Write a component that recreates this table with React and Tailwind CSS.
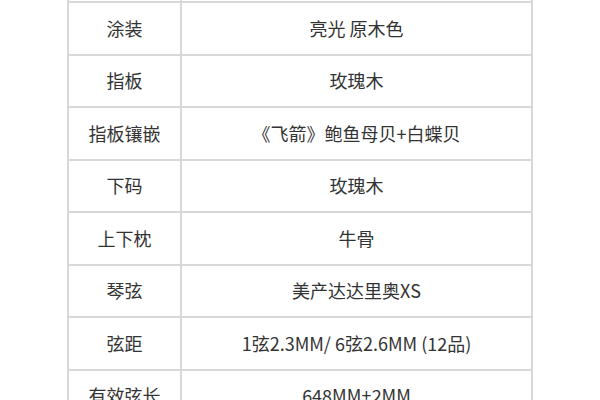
import React from "react";

const rows = [
  ["涂装", "亮光 原木色"],
  ["指板", "玫瑰木"],
  ["指板镶嵌", "《飞箭》鲍鱼母贝+白蝶贝"],
  ["下码", "玫瑰木"],
  ["上下枕", "牛骨"],
  ["琴弦", "美产达达里奥XS"],
  ["弦距", "1弦2.3MM/ 6弦2.6MM (12品)"],
  [
    "有效弦长",
    <>
      648MM
      <span style={{ fontFamily: '"Noto Sans", sans-serif' }}>±</span>
      2MM
    </>,
  ],
];

export default function App() {
  return (
    <div
      className="w-[600px] h-[400px] overflow-hidden bg-white"
      style={{ fontFamily: '"Noto Sans CJK SC", "Noto Sans", sans-serif' }}
    >
      <div className="ml-[67px] w-[466px] border-x-2 border-[#d8d8d8] text-[#333333] text-[18px]">
        <div className="grid grid-cols-[113px_1fr] h-[3px] border-b-2 border-[#d8d8d8]">
          <div className="border-r-2 border-[#d8d8d8]" />
          <div />
        </div>
        {rows.map(([k, v]) => (
          <div
            key={k}
            className="grid grid-cols-[113px_1fr] h-[52.5px] border-b-2 border-[#d8d8d8]"
          >
            <div className="flex items-center justify-center border-r-2 border-[#d8d8d8]">
              {k}
            </div>
            <div className="flex items-center justify-center">{v}</div>
          </div>
        ))}
      </div>
    </div>
  );
}
